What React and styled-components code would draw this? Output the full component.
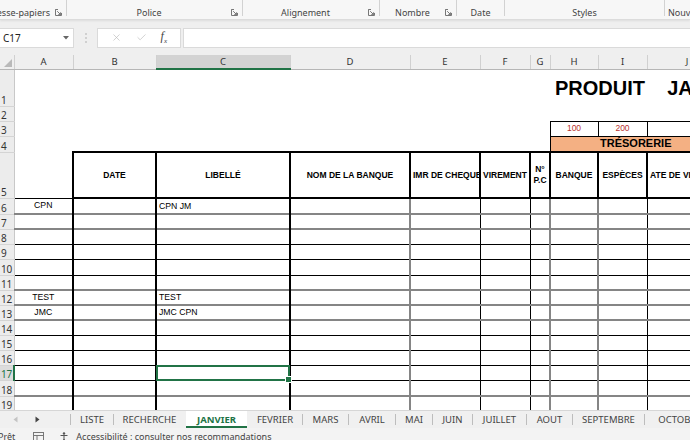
import React from 'react';
import styled, { createGlobalStyle } from 'styled-components';
import { X, Check } from 'lucide-react';

const GlobalStyle = createGlobalStyle`
  * { box-sizing: border-box; }
  html, body { margin: 0; padding: 0; }
  body {
    width: 690px;
    height: 440px;
    overflow: hidden;
    background: #f3f3f3;
    font-family: "Liberation Sans", Arial, sans-serif;
  }
`;

const GREEN = '#217346';
const UI_FONT = '"Noto Sans", "DejaVu Sans", sans-serif';

const Window = styled.div`
  display: flex;
  flex-direction: column;
  width: 690px;
  height: 440px;
  overflow: hidden;
`;

/* ---------- ribbon group labels ---------- */
const Ribbon = styled.div`
  flex: 0 0 20px;
  display: flex;
  background: #f7f7f7;
  border-bottom: 1px solid #dcdcdc;
  box-shadow: 0 1px 2px rgba(0, 0, 0, 0.08);
  overflow: hidden;
  position: relative;
  z-index: 1;
`;

const RibbonGroup = styled.div`
  flex: 0 0 ${(p) => p.$width}px;
  height: 16px;
  display: grid;
  grid-template-columns: minmax(0, 1fr) auto;
  align-items: end;
  padding-right: ${(p) => (p.$launcher ? 4 : 0)}px;
  border-right: ${(p) => (p.$last ? 'none' : '1px solid #d2d2d2')};
`;

const justify = { left: 'flex-start', right: 'flex-end', center: 'center' };

const GroupLabel = styled.span`
  display: flex;
  justify-content: ${(p) => justify[p.$align || 'center']};
  min-width: 0;
  font-family: ${UI_FONT};
  font-size: 9px;
  line-height: 1;
  color: #444;
  white-space: nowrap;
  padding-left: ${(p) => (p.$align === 'left' ? 3 : 0)}px;
  padding-right: ${(p) => (p.$align === 'right' ? 5 : 0)}px;
  margin-bottom: -1px;
`;

const LauncherIcon = () => (
  <svg width="7" height="7" viewBox="0 0 7 7">
    <path d="M0.5 3 V0.5 H3 M0.5 0.5 V6.5 H6.5 V4" fill="none" stroke="#777" strokeWidth="1" />
    <path d="M2.2 2.2 L5.6 5.6 M5.6 3.3 V5.6 H3.3" fill="none" stroke="#777" strokeWidth="1" />
  </svg>
);

/* ---------- formula bar ---------- */
const FormulaBar = styled.div`
  flex: 0 0 35px;
  display: flex;
  align-items: center;
  background: #efefef;
`;

const NameBox = styled.div`
  width: 74px;
  height: 20px;
  display: flex;
  align-items: center;
  justify-content: space-between;
  padding: 0 4px 0 3px;
  background: #fff;
  border: 1px solid #dadada;
  border-left: none;
  font-family: ${UI_FONT};
  font-size: 10px;
  color: #222;
`;

const Grip = styled.div`
  width: 23px;
  display: flex;
  justify-content: center;
`;

const FxBox = styled.div`
  width: 84px;
  height: 20px;
  display: flex;
  align-items: center;
  justify-content: space-around;
  padding: 0 6px;
  background: #fff;
  border: 1px solid #dadada;
`;

const FxLabel = styled.span`
  font-family: "Liberation Serif", serif;
  font-style: italic;
  font-size: 12px;
  color: #444;
  sub {
    font-size: 7px;
  }
`;

const FormulaInput = styled.div`
  flex: 1;
  height: 20px;
  margin-left: 2px;
  background: #fff;
  border: 1px solid #dadada;
  border-right: none;
`;

/* ---------- sheet ---------- */
const Sheet = styled.div`
  flex: 1;
  background: #fff;
  overflow: hidden;
`;

const Grid = styled.table`
  table-layout: fixed;
  border-collapse: collapse;
  width: 727px;
`;

const ColHead = styled.th`
  height: 14px;
  padding: 0;
  font-family: ${UI_FONT};
  font-weight: 400;
  font-size: 9.5px;
  line-height: 1;
  color: #333;
  background: ${(p) => (p.$selected ? '#d3d3d3' : '#efefef')};
  border-right: 1px solid #d0d0d0;
  border-bottom: ${(p) => (p.$selected ? `2px solid ${GREEN}` : '1px solid #b6b6b6')};
`;

const Corner = styled.th`
  height: 14px;
  padding: 0;
  background: #efefef;
  border-right: 1px solid #d0d0d0;
  border-bottom: 1px solid #b6b6b6;
  text-align: right;
  vertical-align: bottom;
  svg {
    display: block;
    margin: 0 2px 2px auto;
  }
`;

const RowHead = styled.th`
  padding: 0 0 1px 1px;
  font-family: ${UI_FONT};
  font-weight: 400;
  font-size: 10px;
  line-height: 1;
  text-align: left;
  vertical-align: bottom;
  overflow: hidden;
  white-space: nowrap;
  letter-spacing: -0.3px;
  color: ${(p) => (p.$selected ? GREEN : '#333')};
  background: ${(p) => (p.$selected ? '#dcdcdc' : '#ececec')};
  border-bottom: 1px solid #d4d4d4;
  border-right: ${(p) => (p.$selected ? `2px solid ${GREEN}` : '1px solid #c8c8c8')};
`;

const lines = {
  k2: '2px solid #000',
  k1: '1px solid #000',
  g2: '2px solid #858585',
  none: 'none',
};

const Cell = styled.td`
  padding: 0 2px;
  border-top: ${(p) => lines[p.$top || 'none']};
  border-left: ${(p) => lines[p.$left || 'none']};
  text-align: ${(p) => p.$align || 'left'};
  font-size: 8.7px;
  line-height: 1;
  color: #000;
  white-space: nowrap;
  overflow: ${(p) => (p.$selected ? 'visible' : 'hidden')};
  vertical-align: middle;
  position: relative;

  ${(p) =>
    p.$selected &&
    `
    &::after {
      content: '';
      position: absolute;
      left: -1px; top: -1px; right: -1px; bottom: -1px;
      border: 2px solid ${GREEN};
      z-index: 2;
    }
    &::before {
      content: '';
      position: absolute;
      width: 5px; height: 5px;
      right: -3px; bottom: -3px;
      background: ${GREEN};
      border: 1px solid #fff;
      z-index: 3;
    }
  `}
`;

const HeaderCell = styled(Cell)`
  text-align: ${(p) => p.$align || 'center'};
  font-weight: 700;
  font-size: 8.5px;
  line-height: 11px;
  white-space: pre;
`;

const PriceCell = styled(Cell)`
  text-align: center;
  font-size: 8.5px;
  color: #b8322e;
`;

const BandCell = styled(Cell)`
  text-align: center;
  font-weight: 700;
  font-size: 11px;
  background: #f4b083;
  padding-right: 8px;
`;

const TitleCell = styled(Cell)`
  font-weight: 700;
  font-size: 20px;
  white-space: pre;
  overflow: visible;
  padding-left: 5px;
`;

/* ---------- sheet tabs ---------- */
const TabBar = styled.div`
  flex: 0 0 18px;
  display: flex;
  align-items: stretch;
  background: #f0f0f0;
  border-top: 1px solid #d6d6d6;
  overflow: hidden;
`;

const Nav = styled.div`
  flex: 0 0 70px;
  display: flex;
  align-items: center;
  gap: 17px;
  padding-left: 13px;
`;

const Sep = styled.div`
  flex: 0 0 1px;
  margin: 3px 0;
  background: ${(p) => (p.$hidden ? 'transparent' : '#bdbdbd')};
`;

const SheetTab = styled.div`
  flex: 0 0 ${(p) => p.$width}px;
  display: flex;
  align-items: center;
  justify-content: center;
  font-family: ${UI_FONT};
  font-size: 9.5px;
  white-space: nowrap;
  color: ${(p) => (p.$active ? GREEN : '#444')};
  font-weight: ${(p) => (p.$active ? 700 : 400)};
  background: ${(p) => (p.$active ? '#fff' : 'transparent')};
  border-bottom: ${(p) => (p.$active ? `2px solid ${GREEN}` : '2px solid transparent')};
  padding-top: 1px;
`;

/* ---------- status bar ---------- */
const StatusBar = styled.div`
  flex: 0 0 12px;
  display: flex;
  align-items: flex-start;
  gap: 6px;
  padding-top: 4px;
  background: #f3f3f3;
  overflow: hidden;
  font-family: ${UI_FONT};
  font-size: 9px;
  line-height: 1;
  color: #444;
  white-space: nowrap;
`;

const StatusText = styled.span`
  margin-left: ${(p) => p.$offset || 0}px;
`;

/* ---------- data ---------- */
const columns = [
  { key: 'A', width: 59, left: 'none' },
  { key: 'B', width: 83, left: 'k2' },
  { key: 'C', width: 134, left: 'k2' },
  { key: 'D', width: 120, left: 'k2' },
  { key: 'E', width: 70, left: 'g2' },
  { key: 'F', width: 50, left: 'k1' },
  { key: 'G', width: 20, left: 'k1' },
  { key: 'H', width: 48, left: 'g2' },
  { key: 'I', width: 49, left: 'g2' },
  { key: 'J', width: 80, left: 'k1' },
];

const headers = [
  { key: 'B', text: 'DATE' },
  { key: 'C', text: 'LIBELLÉ' },
  { key: 'D', text: 'NOM DE LA BANQUE' },
  { key: 'E', text: 'IMR DE CHEQUE' },
  { key: 'F', text: 'VIREMENT' },
  { key: 'G', text: 'N°\nP.C' },
  { key: 'H', text: 'BANQUE' },
  { key: 'I', text: 'ESPÈCES' },
  { key: 'J', text: 'ATE DE VIREMENT', align: 'left' },
];

const rows = [
  { n: 6, h: 16, top: 'k1', A: 'CPN', C: 'CPN JM' },
  { n: 7, h: 15, top: 'g2' },
  { n: 8, h: 15, top: 'g2' },
  { n: 9, h: 15, top: 'k1' },
  { n: 10, h: 16, top: 'k1' },
  { n: 11, h: 15, top: 'k1' },
  { n: 12, h: 15, top: 'g2', A: 'TEST', C: 'TEST' },
  { n: 13, h: 15, top: 'g2', A: 'JMC', C: 'JMC CPN' },
  { n: 14, h: 15, top: 'g2' },
  { n: 15, h: 15, top: 'k1' },
  { n: 16, h: 15, top: 'k1' },
  { n: 17, h: 15, top: 'k1', selected: 'C' },
  { n: 18, h: 16, top: 'k1' },
  { n: 19, h: 15, top: 'g2' },
];

const ribbonGroups = [
  { label: 'Presse-papiers', width: 67, launcher: true, align: 'right' },
  { label: 'Police', width: 176, launcher: true },
  { label: 'Alignement', width: 137, launcher: true },
  { label: 'Nombre', width: 77, launcher: true },
  { label: 'Date', width: 48 },
  { label: 'Styles', width: 160 },
  { label: 'Nouveau groupe', width: 80, align: 'left', last: true },
];

const tabs = [
  { name: 'LISTE', width: 42 },
  { name: 'RECHERCHE', width: 71 },
  { name: 'JANVIER', width: 61, active: true },
  { name: 'FEVRIER', width: 54 },
  { name: 'MARS', width: 45 },
  { name: 'AVRIL', width: 46 },
  { name: 'MAI', width: 36 },
  { name: 'JUIN', width: 39 },
  { name: 'JUILLET', width: 53 },
  { name: 'AOUT', width: 45 },
  { name: 'SEPTEMBRE', width: 71 },
  { name: 'OCTOBRE', width: 70 },
];

const Tri = ({ dir, color }) => (
  <svg width="5" height="7" viewBox="0 0 5 7">
    <path d={dir === 'left' ? 'M4.5 0.5 L0.5 3.5 L4.5 6.5 Z' : 'M0.5 0.5 L4.5 3.5 L0.5 6.5 Z'} fill={color} />
  </svg>
);

const App = () => {
  return (
    <>
      <GlobalStyle />
      <Window>
        <Ribbon>
          {ribbonGroups.map((g) => (
            <RibbonGroup key={g.label} $width={g.width} $launcher={g.launcher} $last={g.last}>
              <GroupLabel $align={g.align}>
                <span>{g.label}</span>
              </GroupLabel>
              {g.launcher ? <LauncherIcon /> : <span />}
            </RibbonGroup>
          ))}
        </Ribbon>

        <FormulaBar>
          <NameBox>
            <span>C17</span>
            <svg width="6" height="4" viewBox="0 0 6 4">
              <path d="M0 0 H6 L3 3.5 Z" fill="#666" />
            </svg>
          </NameBox>
          <Grip>
            <svg width="2" height="10" viewBox="0 0 2 10">
              <circle cx="1" cy="1" r="0.8" fill="#a8a8a8" />
              <circle cx="1" cy="5" r="0.8" fill="#a8a8a8" />
              <circle cx="1" cy="9" r="0.8" fill="#a8a8a8" />
            </svg>
          </Grip>
          <FxBox>
            <X size={11} color="#b8b8b8" strokeWidth={1.4} />
            <Check size={11} color="#b8b8b8" strokeWidth={1.4} />
            <FxLabel>
              f<sub>x</sub>
            </FxLabel>
          </FxBox>
          <FormulaInput />
        </FormulaBar>

        <Sheet>
          <Grid>
            <colgroup>
              <col style={{ width: 14 }} />
              {columns.map((c) => (
                <col key={c.key} style={{ width: c.width }} />
              ))}
            </colgroup>
            <thead>
              <tr>
                <Corner>
                  <svg width="8" height="8" viewBox="0 0 8 8">
                    <path d="M8 0 V8 H0 Z" fill="#b9b9b9" />
                  </svg>
                </Corner>
                {columns.map((c) => (
                  <ColHead key={c.key} $selected={c.key === 'C'}>
                    {c.key}
                  </ColHead>
                ))}
              </tr>
            </thead>
            <tbody>
              <tr style={{ height: 37 }}>
                <RowHead>1</RowHead>
                <Cell colSpan={7} />
                <TitleCell colSpan={3}>{'PRODUIT    JANVIER'}</TitleCell>
              </tr>
              <tr style={{ height: 15 }}>
                <RowHead>2</RowHead>
                <Cell colSpan={10} />
              </tr>
              <tr style={{ height: 15 }}>
                <RowHead>3</RowHead>
                <Cell colSpan={7} />
                <PriceCell $top="k1" $left="k1">100</PriceCell>
                <PriceCell $top="k1" $left="k1">200</PriceCell>
                <PriceCell $top="k1" $left="k1" />
              </tr>
              <tr style={{ height: 16 }}>
                <RowHead>4</RowHead>
                <Cell colSpan={7} />
                <BandCell colSpan={3} $top="k1" $left="k1">TRÉSORERIE</BandCell>
              </tr>
              <tr style={{ height: 46 }}>
                <RowHead>5</RowHead>
                <Cell />
                {headers.map((h) => (
                  <HeaderCell key={h.key} $top="k2" $left="k2" $align={h.align}>
                    {h.text}
                  </HeaderCell>
                ))}
              </tr>
              {rows.map((r) => (
                <tr key={r.n} style={{ height: r.h }}>
                  <RowHead $selected={r.selected}>{r.n}</RowHead>
                  {columns.map((c) => (
                    <Cell
                      key={c.key}
                      $top={r.n === 6 && c.key !== 'A' ? 'k2' : r.top}
                      $left={c.left}
                      $align={c.key === 'A' ? 'center' : 'left'}
                      $selected={r.selected === c.key}
                    >
                      {r[c.key] || ''}
                    </Cell>
                  ))}
                </tr>
              ))}
            </tbody>
          </Grid>
        </Sheet>

        <TabBar>
          <Nav>
            <Tri dir="left" color="#c4c4c4" />
            <Tri dir="right" color="#444" />
          </Nav>
          {tabs.map((t, i) => {
            const prevActive = i > 0 && tabs[i - 1].active;
            return (
              <React.Fragment key={t.name}>
                <Sep $hidden={t.active || prevActive} />
                <SheetTab $width={t.width} $active={t.active}>
                  {t.name}
                </SheetTab>
              </React.Fragment>
            );
          })}
        </TabBar>

        <StatusBar>
          <StatusText $offset={-2}>Prêt</StatusText>
          <svg width="11" height="10" viewBox="0 0 11 10" style={{ marginLeft: 12 }}>
            <rect x="0.5" y="0.5" width="10" height="9" fill="none" stroke="#777" />
            <path d="M0.5 3.5 H10.5 M4 3.5 V9.5" stroke="#777" />
          </svg>
          <svg width="10" height="10" viewBox="0 0 10 10" style={{ marginLeft: 10 }}>
            <circle cx="4" cy="1.5" r="1.2" fill="#555" />
            <path d="M0.5 3.5 H7.5 M4 3.5 V7 M4 7 L2 10 M4 7 L6 10" stroke="#555" fill="none" />
          </svg>
          <StatusText>Accessibilité : consulter nos recommandations</StatusText>
        </StatusBar>
      </Window>
    </>
  );
};

export default App;
